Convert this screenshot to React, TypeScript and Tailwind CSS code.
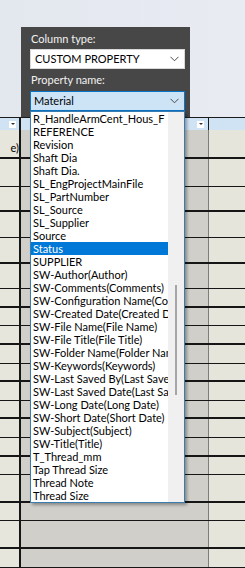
import React from 'react';

const items = [
  'R_HandleArmCent_Hous_F',
  'REFERENCE',
  'Revision',
  'Shaft Dia',
  'Shaft Dia.',
  'SL_EngProjectMainFile',
  'SL_PartNumber',
  'SL_Source',
  'SL_Supplier',
  'Source',
  'Status',
  'SUPPLIER',
  'SW-Author(Author)',
  'SW-Comments(Comments)',
  'SW-Configuration Name(Configuration Name)',
  'SW-Created Date(Created Date)',
  'SW-File Name(File Name)',
  'SW-File Title(File Title)',
  'SW-Folder Name(Folder Name)',
  'SW-Keywords(Keywords)',
  'SW-Last Saved By(Last Saved By)',
  'SW-Last Saved Date(Last Saved Date)',
  'SW-Long Date(Long Date)',
  'SW-Short Date(Short Date)',
  'SW-Subject(Subject)',
  'SW-Title(Title)',
  'T_Thread_mm',
  'Tap Thread Size',
  'Thread Note',
  'Thread Size',
];

// table rows below the header: height and whether the bottom rule is heavy
const rows = [
  { h: 'h-[29px]', heavy: true },
  { h: 'h-[28px]', heavy: false },
  { h: 'h-[25px]', heavy: true },
  { h: 'h-[26px]', heavy: false },
  { h: 'h-[26px]', heavy: true },
  { h: 'h-[25px]', heavy: false },
  { h: 'h-[19px]', heavy: true },
  { h: 'h-[18px]', heavy: false },
  { h: 'h-[19px]', heavy: true },
  { h: 'h-[19px]', heavy: false },
  { h: 'h-[18px]', heavy: true },
  { h: 'h-[19px]', heavy: false },
  { h: 'h-[18px]', heavy: true },
  { h: 'h-[19px]', heavy: false },
  { h: 'h-[19px]', heavy: true },
  { h: 'h-[18px]', heavy: false },
  { h: 'h-[28px]', heavy: true },
  { h: 'h-[18px]', heavy: false },
  { h: 'h-[28px]', heavy: true },
  { h: 'h-[19px]', heavy: false },
];

const Chevron = () => (
  <svg width="9" height="6" viewBox="0 0 9 6" className="shrink-0">
    <polyline points="0.5,0.8 4.5,4.8 8.5,0.8" fill="none" stroke="#4a4a4a" strokeWidth="1" />
  </svg>
);

const HeaderButton = () => (
  <div className="w-[7px] h-[7px] bg-white flex items-center justify-center">
    <div className="w-0 h-0 border-l-[2px] border-r-[2px] border-t-[2px] border-l-transparent border-r-transparent border-t-[#333]" />
  </div>
);

export default function App() {
  return (
    <div
      className="relative w-[245px] h-[568px] overflow-hidden bg-[#e5e9ef] text-[11px] text-black"
      style={{ fontFamily: 'Lato, "Noto Sans", sans-serif' }}
    >
      {/* sheet behind the popup */}
      <div className="h-[117px] bg-gradient-to-r from-[#e3e7ee] to-[#e9ebf3]" />
      <div className="h-[13px] flex bg-[#cfe3f5] border-t border-[#1a1a1a]">
        <div className="w-[21px] border-r-2 border-[#1a1a1a] flex items-center justify-end pr-[3px]">
          <HeaderButton />
        </div>
        <div className="w-[188px] border-r border-[#1a1a1a] flex items-center justify-end pr-[4px]">
          <HeaderButton />
        </div>
        <div className="flex-1" />
      </div>
      {rows.map((r, i) => (
        <div
          key={i}
          className={`${r.h} flex ${r.heavy ? 'border-b-2' : 'border-b'} border-[#161616]`}
        >
          <div className="w-[21px] bg-[#e6e6dc] border-r-2 border-[#161616] overflow-hidden flex items-end justify-end pb-[3px] leading-[13px]">
            {i === 0 ? <span className="whitespace-nowrap">e)</span> : null}
          </div>
          <div className="w-[188px] bg-[#d0cfca] border-r border-[#7d7d7d]" />
          <div className="flex-1 bg-[#e5e5db]" />
        </div>
      ))}

      {/* property popup */}
      <div className="absolute left-[21px] top-[27px] w-[169px] h-[90px] bg-[#474747] pl-[9px] pt-[2px]">
        <div className="h-[20px] leading-[20px] pl-[1px] text-[#f2f2f2]">Column type:</div>
        <div className="w-[155px] h-[20px] bg-white border border-[#d9d9d9] flex items-center justify-between pl-[4px] pr-[5px]">
          <span className="leading-[18px]">CUSTOM PROPERTY</span>
          <Chevron />
        </div>
        <div className="h-[22px] leading-[22px] pl-[1px] text-[#f2f2f2]">Property name:</div>
        <div className="relative w-[155px] h-[20px] bg-[#cde4f7] border border-[#0a74c7] flex items-center justify-between pl-[3px] pr-[5px]">
          <span className="leading-[18px]">Material</span>
          <Chevron />

          <div className="absolute left-[-1px] top-[19px] w-[155px] h-[392px] bg-white border border-[#3b7cb0] shadow-[2px_2px_3px_rgba(0,0,0,0.35)] flex">
            <div className="w-[137px] flex flex-col">
              {items.map((it) => (
                <div
                  key={it}
                  className={`h-[13px] leading-[13px] pl-[2px] whitespace-nowrap overflow-hidden ${
                    it === 'Status' ? 'bg-[#0078d7] text-white' : ''
                  }`}
                >
                  {it}
                </div>
              ))}
            </div>
            <div className="flex-1 bg-[#f0f0f0]">
              <div className="mt-[173px] ml-[7px] w-[2px] h-[110px] bg-[#a6a6a6]" />
            </div>
          </div>
        </div>
      </div>
    </div>
  );
}
